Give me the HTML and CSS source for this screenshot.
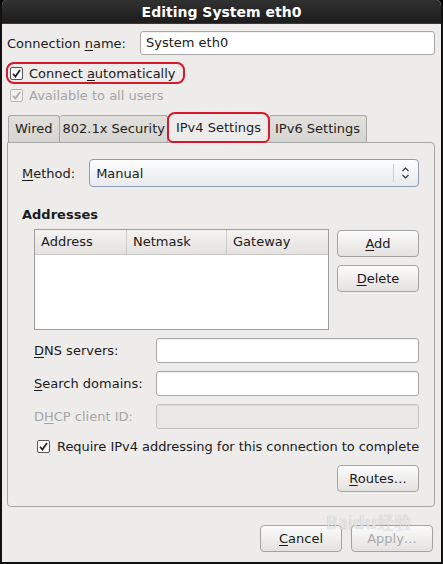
FILE: index.html
```html
<!DOCTYPE html>
<html lang="en">
<head>
    <meta charset="UTF-8">
    <title>Editing System eth0</title>
    <link rel="stylesheet" href="styles.css">
</head>
<body>

<div class="window">
    <div class="titlebar">Editing System eth0</div>

    <div class="content">
        <div class="name-row">
            <label>Connection <u>n</u>ame:</label>
            <div class="entry">System eth0</div>
        </div>

        <div class="check-row marked">
            <svg class="check" width="13" height="13" viewBox="0 0 13 13"><rect x="0.5" y="0.5" width="12" height="12" rx="1.5" fill="#fbfbfb" stroke="#555"/><path d="M3 6.8 L5.4 9.6 L10 3" fill="none" stroke="#222" stroke-width="1.7"/></svg>
            <span>Connect <u>a</u>utomatically</span>
        </div>

        <div class="check-row disabled">
            <svg class="check" width="13" height="13" viewBox="0 0 13 13"><rect x="0.5" y="0.5" width="12" height="12" rx="1.5" fill="#f2f1f0" stroke="#b5b5b5"/><path d="M3 6.8 L5.4 9.6 L10 3" fill="none" stroke="#aaa" stroke-width="1.7"/></svg>
            <span>Available to all users</span>
        </div>

        <div class="notebook">
            <div class="tabs">
                <div class="tab first">Wired</div>
                <div class="tab tight">802.1x Security</div>
                <div class="tab active">IPv4 Settings</div>
                <div class="tab">IPv6 Settings</div>
            </div>

            <div class="panel">
                <div class="method-row">
                    <label><u>M</u>ethod:</label>
                    <div class="combo">
                        <span class="combo-text">Manual</span>
                        <span class="combo-sep"></span>
                        <svg width="9" height="14" viewBox="0 0 9 14"><path d="M1.5 5 L4.5 2 L7.5 5 M1.5 9 L4.5 12 L7.5 9" fill="none" stroke="#333" stroke-width="1.2"/></svg>
                    </div>
                </div>

                <h3>Addresses</h3>

                <div class="addresses">
                    <div class="table">
                        <div class="table-head">
                            <span>Address</span>
                            <span>Netmask</span>
                            <span>Gateway</span>
                        </div>
                    </div>
                    <div class="side-buttons">
                        <button><u>A</u>dd</button>
                        <button><u>D</u>elete</button>
                    </div>
                </div>

                <div class="form">
                    <label><u>D</u>NS servers:</label>
                    <div class="entry"></div>
                    <label><u>S</u>earch domains:</label>
                    <div class="entry"></div>
                    <label class="dim">D<u>H</u>CP client ID:</label>
                    <div class="entry off"></div>
                </div>

                <div class="check-row require">
                    <svg class="check" width="13" height="13" viewBox="0 0 13 13"><rect x="0.5" y="0.5" width="12" height="12" rx="1.5" fill="#fbfbfb" stroke="#555"/><path d="M3 6.8 L5.4 9.6 L10 3" fill="none" stroke="#222" stroke-width="1.7"/></svg>
                    <span>Require IPv4 addressing for this connection to complete</span>
                </div>

                <div class="routes">
                    <button><u>R</u>outes…</button>
                </div>
            </div>
        </div>

        <div class="dialog-buttons">
            <button><u>C</u>ancel</button>
            <button class="off">Apply…</button>
            <span class="watermark">Bai<b>du</b>经验</span>
        </div>
    </div>
</div>

</body>
</html>
```

FILE: styles.css
```css
* {
    margin: 0;
    padding: 0;
    box-sizing: border-box;
}

body {
    font-family: "DejaVu Sans", "Noto Sans CJK SC", sans-serif;
    font-size: 13px;
    color: #1a1a1a;
    background: #000;
}

u {
    text-decoration: underline;
    text-underline-offset: 2px;
}

.window {
    width: 443px;
    height: 564px;
    background: #edeceb;
    border: 2px solid #111;
    border-top: none;
    border-radius: 6px 6px 0 0;
    overflow: hidden;
    display: flex;
    flex-direction: column;
}

.titlebar {
    height: 24px;
    background: linear-gradient(#313131, #1c1c1c);
    color: #fff;
    font-weight: bold;
    font-size: 14px;
    text-align: center;
    line-height: 24px;
    border-bottom: 1px solid #3a3a3a;
}

.content {
    flex: 1;
    padding: 7px 6px 0 5px;
    display: flex;
    flex-direction: column;
    position: relative;
}

.name-row {
    display: flex;
    align-items: center;
    gap: 14px;
    height: 24px;
}

.entry {
    flex: 1;
    height: 24px;
    background: #fff;
    border: 1px solid #a9a9a9;
    border-radius: 3px;
    padding: 0 5px;
    line-height: 22px;
    box-shadow: inset 0 1px 1px rgba(0, 0, 0, 0.06);
}

.entry.off {
    background: #e9e8e7;
    border-color: #c2c2c2;
}

.check-row {
    display: flex;
    align-items: center;
    gap: 6px;
    height: 21px;
    white-space: nowrap;
}

.check {
    flex: none;
}

.marked {
    margin-top: 7px;
    align-self: flex-start;
    padding: 0 7px 0 2px;
    margin-left: -1px;
    border: 2px solid #d3192c;
    border-radius: 8px;
    height: 22px;
}

.disabled {
    color: #a5a5a5;
    padding-left: 3px;
    height: 22px;
}

/* Notebook */
.notebook {
    margin-top: 6px;
}

.tabs {
    display: flex;
    align-items: flex-end;
    height: 30px;
}

.tab {
    height: 27px;
    line-height: 26px;
    padding: 0 6px;
    background: linear-gradient(#e2e0dd, #d6d4d0);
    border: 1px solid #a6a6a6;
    border-bottom: none;
    border-left: none;
    border-radius: 3px 3px 0 0;
    color: #1e1e1e;
}

.tab.first {
    border-left: 1px solid #a6a6a6;
    margin-left: 1px;
}

.tab.tight {
    padding: 0 2px 0 3px;
}

.tab.active {
    height: 31px;
    line-height: 27px;
    padding: 0 7px;
    background: #edeceb;
    border: 2px solid #d3192c;
    border-radius: 8px 8px 6px 6px;
    margin-left: -1px;
    margin-right: -1px;
    position: relative;
    top: 1px;
    z-index: 1;
}

.panel {
    height: 365px;
    border: 1px solid #a6a6a6;
    border-radius: 0 4px 4px 4px;
    padding: 16px 15px 0 14px;
    background: #edeceb;
}

.method-row {
    display: flex;
    align-items: center;
    gap: 14px;
}

.combo {
    flex: 1;
    height: 28px;
    display: flex;
    align-items: center;
    padding: 0 8px 0 6px;
    background: linear-gradient(#fdfdfd, #e8eaee);
    border: 1px solid #8e9db5;
    border-radius: 4px;
}

.combo-text {
    flex: 1;
}

.combo-sep {
    width: 1px;
    height: 18px;
    background: #c9cdd3;
    margin-right: 7px;
}

h3 {
    font-size: 13px;
    margin-top: 20px;
    height: 17px;
}

.addresses {
    display: grid;
    grid-template-columns: 295px 82px;
    gap: 8px;
    margin-top: 5px;
    margin-left: 12px;
}

.table {
    height: 101px;
    background: #fff;
    border: 1px solid #9d9d9d;
}

.table-head {
    display: grid;
    grid-template-columns: 91px 100px 1fr;
    height: 25px;
    background: linear-gradient(#f4f3f2, #e4e2df);
    border-bottom: 1px solid #c7c5c1;
    line-height: 24px;
}

.table-head span {
    padding-left: 6px;
    border-left: 1px solid #cfcdc9;
}

.table-head span:first-child {
    border-left: none;
}

.side-buttons {
    display: flex;
    flex-direction: column;
    gap: 8px;
    padding-top: 1px;
}

button {
    font-family: inherit;
    font-size: 13px;
    color: #1a1a1a;
    height: 27px;
    background: linear-gradient(#fbfbfb, #e3e2e0);
    border: 1px solid #a3a3a3;
    border-radius: 4px;
}

.side-buttons button {
    width: 82px;
}

.form {
    display: grid;
    grid-template-columns: 122px 263px;
    row-gap: 8px;
    align-items: center;
    margin-top: 8px;
    margin-left: 12px;
}

.form .entry {
    height: 25px;
}

.dim {
    color: #a5a5a5;
}

.require {
    margin-top: 7px;
    margin-left: 15px;
    gap: 7px;
    letter-spacing: -0.04px;
}

.routes {
    display: flex;
    justify-content: flex-end;
    margin-top: 8px;
}

.routes button {
    width: 82px;
}

.dialog-buttons {
    display: flex;
    justify-content: flex-end;
    gap: 9px;
    margin-top: 18px;
    padding-right: 2px;
}

.dialog-buttons button {
    width: 82px;
}

.dialog-buttons button.off {
    color: #a9a9a9;
}

.watermark {
    position: absolute;
    right: 30px;
    bottom: 28px;
    font-size: 17px;
    color: rgba(255, 255, 255, 0.7);
    text-shadow: 0 0 1px rgba(0, 0, 0, 0.3);
    pointer-events: none;
}

.watermark b {
    font-weight: bold;
}
```
